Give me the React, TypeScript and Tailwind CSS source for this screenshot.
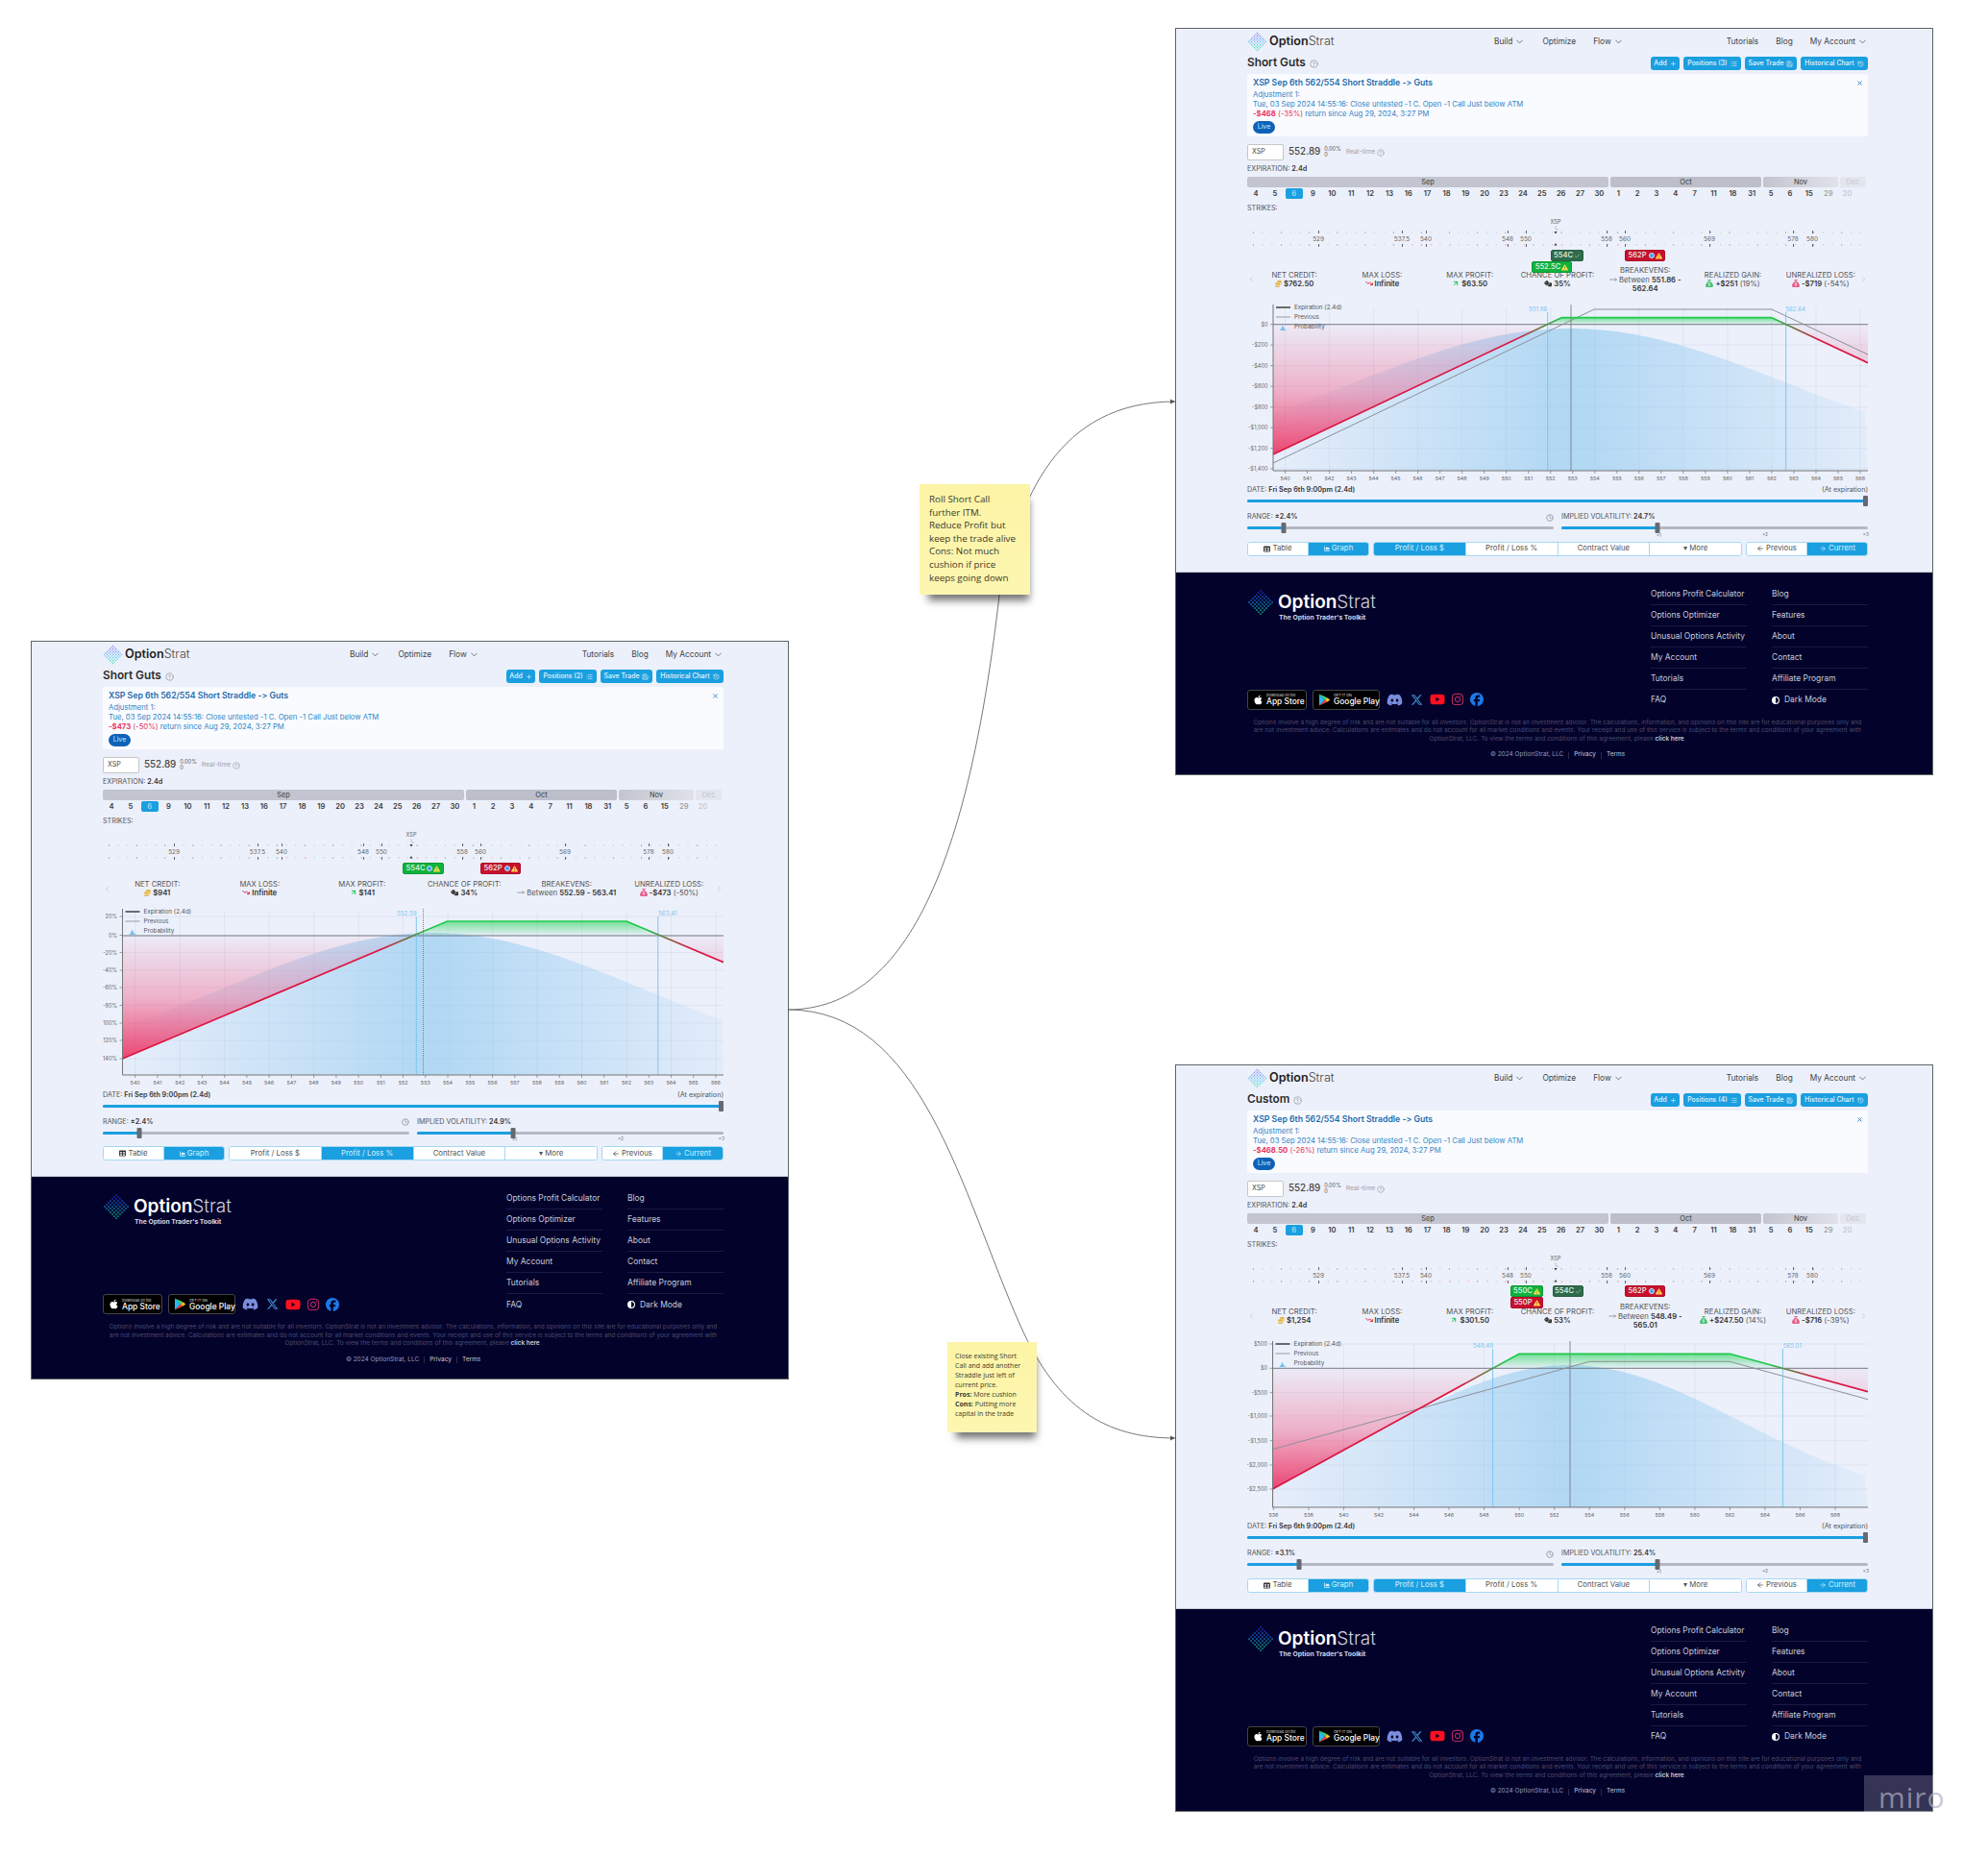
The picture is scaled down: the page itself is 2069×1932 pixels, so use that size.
import React from "react";
import {
  ArrowLeft,
  ArrowRight,
  Check,
  ChevronDown,
  ChevronLeft,
  ChevronRight,
  CircleHelp,
  Clock,
  History,
  List,
  MoveRight,
  Plus,
  Save,
  TrendingDown,
  ArrowUpRight,
  X,
} from "lucide-react";
import {
  FaApple,
  FaChartArea,
  FaCircleHalfStroke,
  FaCoins,
  FaDiscord,
  FaDice,
  FaFacebook,
  FaInstagram,
  FaSackDollar,
  FaTable,
  FaTriangleExclamation,
  FaXTwitter,
  FaYoutube,
} from "react-icons/fa6";

type Pt = [number, number];

interface PillSpec {
  label: string;
  x: number;
  y: number;
  w: number;
  tone: "green" | "dark" | "red";
  info?: boolean;
  check?: boolean;
}

interface StatSpec {
  label: string;
  value: React.ReactNode;
  icon: React.ReactNode;
}

interface ChartSpec {
  id: string;
  plotLeft: number;
  zero: number;
  xStart: number;
  xStep: number;
  xPx: number;
  xTicks: number[];
  xGrid: number[];
  yLabels: [string, number][];
  left: Pt;
  a: Pt;
  b: Pt;
  right: Pt;
  prev?: Pt[];
  be: [string, number][];
  price: number;
  dotted?: boolean;
  mu: number;
  sigma: number;
}

interface FrameSpec {
  left: number;
  top: number;
  title: string;
  positions: number;
  ret: string;
  retPct: string;
  pills: PillSpec[];
  stats: StatSpec[];
  chart: ChartSpec;
  range: string;
  rangePct: number;
  iv: string;
  percentActive?: boolean;
}

const BLUE = "bg-[#1a9fe0]";

const sepDates = [4, 5, 6, 9, 10, 11, 12, 13, 16, 17, 18, 19, 20, 23, 24, 25, 26, 27, 30];
const otherDates = [1, 2, 3, 4, 7, 11, 18, 31, 5, 6, 15];

const footerLinks = [
  ["Options Profit Calculator", "Blog"],
  ["Options Optimizer", "Features"],
  ["Unusual Options Activity", "About"],
  ["My Account", "Contact"],
  ["Tutorials", "Affiliate Program"],
];

const range = (from: number, to: number, step = 1) => {
  const out: number[] = [];
  for (let v = from; v <= to; v += step) out.push(v);
  return out;
};

const Diamond = ({ size, dark }: { size: number; dark?: boolean }) => {
  const dots: React.ReactNode[] = [];
  const n = 7;
  const step = size / (2 * n);
  for (let i = 0; i < n; i++) {
    for (let j = 0; j < n; j++) {
      const t = (i + j) / (2 * n - 2);
      const light = t < 0.5 ? (t < 0.25 ? "#8f7cf0" : "#6f9cf2") : t < 0.75 ? "#5fc6ea" : "#45dcc0";
      const deep = t < 0.5 ? (t < 0.25 ? "#2b35d8" : "#2166e0") : t < 0.75 ? "#1d9ad0" : "#1fc4a4";
      dots.push(
        <circle
          key={`${i}-${j}`}
          cx={size / 2 + (i - j) * step}
          cy={step + (i + j) * step}
          r={step * 0.42}
          fill={dark ? deep : light}
        />
      );
    }
  }
  return (
    <svg width={size} height={size} className="shrink-0">
      {dots}
    </svg>
  );
};

const Nav = () => (
  <div className="flex h-[26px] items-center text-[8.3px] text-[#444]">
    <div className="flex w-[257px] shrink-0 items-center gap-[2px]">
      <Diamond size={21} />
      <span className="text-[12.6px] font-semibold text-[#222]">
        Option<span className="font-light text-[#444]">Strat</span>
      </span>
    </div>
    <div className="flex items-center gap-[18px]">
      <span className="flex items-center gap-[2px]">
        Build <ChevronDown className="h-[11px] w-[11px]" strokeWidth={1.5} />
      </span>
      <span>Optimize</span>
      <span className="flex items-center gap-[2px]">
        Flow <ChevronDown className="h-[11px] w-[11px]" strokeWidth={1.5} />
      </span>
    </div>
    <div className="ml-auto flex items-center gap-[18px]">
      <span>Tutorials</span>
      <span>Blog</span>
      <span className="flex items-center gap-[2px]">
        My Account <ChevronDown className="h-[11px] w-[11px]" strokeWidth={1.5} />
      </span>
    </div>
  </div>
);

const TopBtn = ({ w, label, icon }: { w: string; label: string; icon: React.ReactNode }) => (
  <div className={`flex h-[14px] items-center justify-center gap-[3px] rounded-[3px] text-[6.9px] font-medium text-[#e4f4fd] ${BLUE} ${w}`}>
    {label} {icon}
  </div>
);

const TitleRow = ({ title, positions }: { title: string; positions: number }) => (
  <div className="flex h-[20px] items-center">
    <span className="text-[11.8px] font-semibold text-[#2c2c2c]">{title}</span>
    <CircleHelp className="ml-[4px] h-[9px] w-[9px] text-[#999]" />
    <div className="ml-auto flex items-center gap-[4px]">
      <TopBtn w="w-[30px]" label="Add" icon={<Plus className="h-[7px] w-[7px]" />} />
      <TopBtn w="w-[60px]" label={`Positions (${positions})`} icon={<List className="h-[7px] w-[7px]" />} />
      <TopBtn w="w-[54px]" label="Save Trade" icon={<Save className="h-[7px] w-[7px]" />} />
      <TopBtn w="w-[70px]" label="Historical Chart" icon={<History className="h-[7px] w-[7px]" />} />
    </div>
  </div>
);

const TradeCard = ({ ret, retPct }: { ret: string; retPct: string }) => (
  <div className="relative mt-[1px] h-[65px] rounded-[2px] bg-[#f9fbff] pl-[6px] pt-[4px] text-[7.7px] leading-[10.2px] text-[#3585c4]">
    <div className="mb-[2px] h-[11px] text-[8.7px] font-semibold leading-[11px] text-[#1f6aab] [font-feature-settings:'calt'_0]">
      XSP Sep 6th 562/554 Short Straddle -&gt; Guts
    </div>
    <div>Adjustment 1:</div>
    <div>Tue, 03 Sep 2024 14:55:16: Close untested -1 C. Open -1 Call Just below ATM</div>
    <div>
      <span className="font-bold text-[#e8365d]">{ret}</span> <span className="text-[#e8365d]">{retPct}</span> return since Aug 29, 2024, 3:27 PM
    </div>
    <div className="mt-[1px] flex h-[13px] w-[23px] items-center justify-center rounded-full bg-[#0d62b8] text-[7px] text-[#d5e8fa]">
      Live
    </div>
    <X className="absolute right-[5px] top-[6px] h-[7px] w-[7px] text-[#2a77b8]" strokeWidth={3} />
  </div>
);

const QuoteRow = () => (
  <div className="mt-[8px] flex h-[17px] items-center">
    <div className="flex h-[17px] w-[38px] items-center rounded-[2px] border border-[#c6c6c6] bg-white pl-[4px] text-[7px] text-[#444]">
      XSP
    </div>
    <span className="ml-[5px] text-[9.8px] font-medium text-[#444]">552.89</span>
    <div className="ml-[4px] flex flex-col text-[5.6px] leading-[5.6px] text-[#555]">
      <span>0.00%</span>
      <span>0</span>
    </div>
    <span className="ml-[5px] text-[6.8px] text-[#a0a3ab]">Real-time</span>
    <CircleHelp className="ml-[2px] h-[8px] w-[8px] text-[#a0a3ab]" />
  </div>
);

const DateStrip = () => (
  <>
    <div className="mt-[3px] flex h-[12px] items-center text-[7.2px] text-[#555]">
      EXPIRATION:&nbsp;<span className="font-semibold text-[#333]">2.4d</span>
    </div>
    <div className="mt-[2px] flex h-[11px] gap-[2px] text-center text-[7.4px] font-medium leading-[11px] text-[#555]">
      <div className="w-[376px] rounded-[2px] bg-[#c2c5cf]">Sep</div>
      <div className="w-[157px] rounded-[2px] bg-[#bcbfc9]">Oct</div>
      <div className="w-[78px] rounded-[2px] bg-gradient-to-r from-[#c2c5cf] to-[#e0e2ea]">Nov</div>
      <div className="w-[27px] rounded-[2px] bg-[#e4e6ee] text-[#c9cbd4]">Dec</div>
    </div>
    <div className="-ml-[1px] mt-[1px] flex h-[11px] text-[7.6px] font-semibold leading-[11px] text-[#3a3a3a]">
      {sepDates.concat(otherDates).map((d, i) => (
        <div key={i} className="w-[19.87px] text-center">
          {i === 2 ? <div className={`mx-auto w-[18px] rounded-[2px] text-[#9fd8f5] ${BLUE}`}>{d}</div> : d}
        </div>
      ))}
      <div className="w-[19.87px] text-center font-medium text-[#999]">29</div>
      <div className="w-[19.87px] text-center font-medium text-[#c4c6ce]">20</div>
    </div>
  </>
);

const pillTone = {
  green: "bg-[#0fb33d] border-[#0a9a33]",
  dark: "bg-[#2f6b4b] border-[#2a5f43]",
  red: "bg-[#c8102e] border-[#b00d28]",
};

const Pill = ({ p }: { p: PillSpec }) => (
  <div
    className={`absolute z-10 flex h-[12px] items-center justify-center gap-[1px] rounded-[2px] border text-[7.6px] font-medium text-[#e6f5ea] ${pillTone[p.tone]}`}
    style={{ left: p.x, top: p.y, width: p.w }}
  >
    {p.label}
    {p.info && <span className="ml-[1px] h-[6px] w-[6px] rounded-full border border-[#cfe6fa] bg-[#3c9fe8]" />}
    {p.check ? (
      <Check className="h-[7px] w-[7px] text-[#a8e0c0]" />
    ) : (
      <FaTriangleExclamation className="h-[7px] w-[7px] text-[#ffd84a]" />
    )}
  </div>
);

const strikeLabels: [string, number][] = [
  ["529", 74],
  ["537.5", 161],
  ["540", 186],
  ["548", 271],
  ["550", 290],
  ["558", 374],
  ["560", 393],
  ["569", 481],
  ["578", 568],
  ["580", 588],
];

const StrikeArea = ({ pills }: { pills: PillSpec[] }) => {
  const ticks = range(0, 65).map((i) => 6 + i * 9.72);
  return (
    <div className="relative h-[54px]">
      <svg width={646} height={40} className="absolute left-0 top-0">
        {ticks.map((x, i) => {
          const major = i % 3 === 0;
          const topGreen = x > 290 && x < 545 && i % 2 === 0;
          const lowPink = x > 155 && x < 420 && i % 2 === 1;
          return (
            <g key={i}>
              <rect x={x} y={18} width={0.8} height={major ? 2 : 1.4} fill={topGreen ? "#a0e6b4" : major ? "#a4a7b0" : "#bfc1c9"} />
              <rect x={x} y={31} width={lowPink ? 1.6 : 0.8} height={major ? 2 : 1.4} fill={lowPink ? "#f5bccb" : major ? "#a4a7b0" : "#bfc1c9"} />
            </g>
          );
        })}
        {strikeLabels.map(([t, x]) => (
          <g key={t}>
            <text x={x} y={27.5} fontSize={6.4} fill="#666" textAnchor="middle">
              {t}
            </text>
            <rect x={x} y={17} width={0.9} height={3} fill="#555" />
            <rect x={x} y={31} width={0.9} height={3} fill="#555" />
          </g>
        ))}
        <text x={321} y={10} fontSize={5.6} fill="#666" textAnchor="middle">
          XSP
        </text>
        <path d="M321 12v4h3" fill="none" stroke="#999" strokeWidth={0.5} />
        <path d="M319.5 18h3l-1.5 2.4zM319.5 32.5h3l-1.5-2.4z" fill="#333" />
      </svg>
      {pills.map((p) => (
        <Pill key={p.label} p={p} />
      ))}
    </div>
  );
};

const Stats = ({ stats }: { stats: StatSpec[] }) => (
  <div className="relative flex min-h-[20px] items-center px-[3.5px] text-center text-[7.7px] leading-[9.5px] text-[#555]">
    <ChevronLeft className="absolute left-[0px] top-1/2 h-[9px] w-[9px] -translate-y-1/2 text-[#c0c2ca]" />
    {stats.map((s) => (
      <div key={s.label} className="min-w-0 flex-1">
        <div className="whitespace-nowrap">{s.label}:</div>
        <div>
          <span className="mr-[2px] inline-block align-[-1px]">{s.icon}</span>
          {s.value}
        </div>
      </div>
    ))}
    <ChevronRight className="absolute right-[0px] top-1/2 h-[9px] w-[9px] -translate-y-1/2 text-[#c0c2ca]" />
  </div>
);

const PlChart = ({ c }: { c: ChartSpec }) => {
  const bottom = 174;
  const W = 646;
  const xOf = (v: number) => c.xStart + (v - c.xStep) * c.xPx;
  const be1 = c.be[0][1];
  const be2 = c.be[1][1];
  let prob = `M${c.plotLeft} ${bottom}`;
  for (let x = c.plotLeft; x <= W; x += 4) {
    const y = bottom - 148 * Math.exp(-((x - c.mu) ** 2) / (2 * c.sigma ** 2));
    prob += `L${x} ${y.toFixed(1)}`;
  }
  prob += `L${W} ${bottom}Z`;
  const line = [c.left, c.a, c.b, c.right].map((p) => p.join(" ")).join("L");
  return (
    <svg width={W} height={188} className="block">
      <defs>
        <linearGradient id={`${c.id}-prob`} gradientUnits="userSpaceOnUse" x1={c.plotLeft} x2={W} y1={0} y2={0}>
          <stop offset="0" stopColor="#8cc8ef" stopOpacity={0.06} />
          <stop offset={(c.mu - c.plotLeft) / (W - c.plotLeft)} stopColor="#8cc8ef" stopOpacity={0.62} />
          <stop offset="1" stopColor="#8cc8ef" stopOpacity={0.1} />
        </linearGradient>
        <linearGradient id={`${c.id}-loss`} gradientUnits="userSpaceOnUse" x1={0} x2={0} y1={c.zero} y2={c.left[1]}>
          <stop offset="0" stopColor="#f03a6c" stopOpacity={0.03} />
          <stop offset="0.5" stopColor="#f03a6c" stopOpacity={0.34} />
          <stop offset="1" stopColor="#ee2f60" stopOpacity={0.88} />
        </linearGradient>
        <linearGradient id={`${c.id}-gain`} gradientUnits="userSpaceOnUse" x1={0} x2={0} y1={c.a[1]} y2={c.zero}>
          <stop offset="0" stopColor="#22d455" stopOpacity={0.6} />
          <stop offset="1" stopColor="#22d455" stopOpacity={0.02} />
        </linearGradient>
        <linearGradient id={`${c.id}-line`} gradientUnits="userSpaceOnUse" x1={c.plotLeft} x2={W} y1={0} y2={0}>
          <stop offset={(be1 - 35 - c.plotLeft) / (W - c.plotLeft)} stopColor="#dc1440" />
          <stop offset={(be1 + 14 - c.plotLeft) / (W - c.plotLeft)} stopColor="#1ec94a" />
          <stop offset={(be2 - 14 - c.plotLeft) / (W - c.plotLeft)} stopColor="#1ec94a" />
          <stop offset={(be2 + 35 - c.plotLeft) / (W - c.plotLeft)} stopColor="#dc1440" />
        </linearGradient>
      </defs>
      {c.yLabels.map(([t, y]) => (
        <g key={t}>
          <line x1={c.plotLeft} x2={W} y1={y} y2={y} stroke="#9aa3b8" strokeOpacity={0.22} strokeWidth={0.7} />
          <line x1={c.plotLeft - 3} x2={c.plotLeft} y1={y} y2={y} stroke="#666" strokeWidth={0.6} />
          <text x={c.plotLeft - 5.5} y={y + 2} fontSize={5.6} fill="#666" textAnchor="end">
            {t}
          </text>
        </g>
      ))}
      {c.xGrid.map((v) => (
        <line key={v} x1={xOf(v)} x2={xOf(v)} y1={4} y2={bottom} stroke="#9aa3b8" strokeOpacity={0.22} strokeWidth={0.7} />
      ))}
      <path d={prob} fill={`url(#${c.id}-prob)`} />
      <path d={`M${c.plotLeft} ${c.zero}L${c.left.join(" ")}L${be1} ${c.zero}Z`} fill={`url(#${c.id}-loss)`} />
      <path d={`M${be2} ${c.zero}L${c.right.join(" ")}L${W} ${c.zero}Z`} fill={`url(#${c.id}-loss)`} />
      <path d={`M${be1} ${c.zero}L${c.a.join(" ")}L${c.b.join(" ")}L${be2} ${c.zero}Z`} fill={`url(#${c.id}-gain)`} />
      <line x1={c.plotLeft} x2={W} y1={c.zero} y2={c.zero} stroke="#6b6f78" strokeWidth={0.9} />
      {c.prev && (
        <path d={`M${c.prev.map((p) => p.join(" ")).join("L")}`} fill="none" stroke="#8d8f98" strokeWidth={1} />
      )}
      {c.be.map(([t, x]) => (
        <g key={t}>
          <line x1={x} x2={x} y1={9} y2={bottom} stroke="#7cc6ef" strokeWidth={1} />
          <text x={x - 2 + (x === be2 ? 12 : -8)} y={7.5} fontSize={6.2} fill="#7cc6ef" textAnchor="middle">
            {t}
          </text>
        </g>
      ))}
      <line
        x1={c.price}
        x2={c.price}
        y1={1}
        y2={bottom}
        stroke="#7b7f88"
        strokeWidth={c.dotted ? 1 : 0.9}
        strokeDasharray={c.dotted ? "1 1" : undefined}
      />
      <path d={`M${line}`} fill="none" stroke={`url(#${c.id}-line)`} strokeWidth={1.7} strokeLinejoin="round" />
      <line x1={c.plotLeft} x2={c.plotLeft} y1={1} y2={bottom} stroke="#777" strokeWidth={1} />
      <line x1={c.plotLeft} x2={W} y1={bottom} y2={bottom} stroke="#777" strokeWidth={1} />
      {c.xTicks.map((v) => (
        <g key={v}>
          <line x1={xOf(v)} x2={xOf(v)} y1={bottom} y2={bottom + 3} stroke="#666" strokeWidth={0.6} />
          <text x={xOf(v)} y={184} fontSize={5.4} fill="#666" textAnchor="middle">
            {v}
          </text>
        </g>
      ))}
      <g fontSize={6.3} fill="#555">
        <line x1={c.plotLeft + 3} x2={c.plotLeft + 18} y1={4} y2={4} stroke="#222" strokeWidth={1.3} />
        <text x={c.plotLeft + 22} y={6.2}>
          Expiration (2.4d)
        </text>
        <line x1={c.plotLeft + 3} x2={c.plotLeft + 18} y1={14} y2={14} stroke="#999" strokeWidth={1} />
        <text x={c.plotLeft + 22} y={16}>
          Previous
        </text>
        <path d={`M${c.plotLeft + 6} 28q2 0 4-5.5q2 5.5 5 5.5z`} fill="#73c1ee" />
        <text x={c.plotLeft + 22} y={26}>
          Probability
        </text>
      </g>
    </svg>
  );
};

const Slider = ({ pct, end }: { pct: number; end?: boolean }) => (
  <div className="relative h-[3px] w-full rounded-full bg-[#b5b8c4]">
    <div className={`h-[3px] rounded-full ${BLUE}`} style={{ width: `${pct}%` }} />
    <div
      className={`absolute -top-[4px] h-[11px] w-[5px] rounded-[1px] bg-[#666a70] ${end ? "" : "-translate-x-1/2"}`}
      style={{ left: end ? undefined : `${pct}%`, right: end ? 0 : undefined }}
    />
  </div>
);

const Seg = ({ label, icon, on }: { label: string; icon?: React.ReactNode; on?: boolean }) => (
  <div
    className={`flex flex-1 items-center justify-center gap-[2px] border-l border-[#a5d8f3] first:border-l-0 ${
      on ? `${BLUE} text-[#d9f0fc]` : "bg-white text-[#555]"
    }`}
  >
    {icon}
    {label}
  </div>
);

const Controls = ({ f }: { f: FrameSpec }) => (
  <div className="mt-[1px]">
    <div className="flex h-[12px] items-center justify-between text-[7.2px] text-[#555]">
      <span>
        DATE: <span className="font-semibold text-[#333]">Fri Sep 6th 9:00pm (2.4d)</span>
      </span>
      <span>(At expiration)</span>
    </div>
    <div className="flex h-[10px] items-center">
      <Slider pct={100} end />
    </div>
    <div className="mt-[6px] grid grid-cols-2 gap-x-[8px] text-[7.2px] text-[#555]">
      <div>
        <div className="flex h-[12px] items-center justify-between">
          <span>
            RANGE: <span className="font-semibold text-[#333]">±{f.range}</span>
          </span>
          <Clock className="h-[8px] w-[8px] text-[#a0a3ab]" strokeWidth={3} />
        </div>
        <div className="flex h-[10px] items-center">
          <Slider pct={f.rangePct} />
        </div>
      </div>
      <div>
        <div className="flex h-[12px] items-center">
          IMPLIED VOLATILITY:&nbsp;<span className="font-semibold text-[#333]">{f.iv}</span>
        </div>
        <div className="relative flex h-[10px] items-center">
          <Slider pct={31.5} />
          <span className="absolute left-[31%] top-[10px] text-[4.6px] leading-[5px] text-[#777]">×1</span>
          <span className="absolute left-[65.5%] top-[9px] text-[4.8px] leading-[5px] text-[#777]">×2</span>
          <span className="absolute -right-[1px] top-[9px] text-[4.8px] leading-[5px] text-[#777]">×3</span>
        </div>
      </div>
    </div>
    <div className="mt-[9px] flex h-[15px] gap-[4px] text-[7.8px]">
      <div className="flex w-[127px] overflow-hidden rounded-[3px] border border-[#a5d8f3]">
        <Seg label="Table" icon={<FaTable className="h-[7px] w-[7px] text-[#333]" />} />
        <Seg label="Graph" on icon={<FaChartArea className="h-[6px] w-[6px]" />} />
      </div>
      <div className="flex w-[384px] overflow-hidden rounded-[3px] border border-[#a5d8f3]">
        <Seg label="Profit / Loss $" on={!f.percentActive} />
        <Seg label="Profit / Loss %" on={f.percentActive} />
        <Seg label="Contract Value" />
        <Seg label="▾ More" />
      </div>
      <div className="flex w-[127px] overflow-hidden rounded-[3px] border border-[#a5d8f3]">
        <Seg label="Previous" icon={<ArrowLeft className="h-[8px] w-[8px] text-[#333]" />} />
        <Seg label="Current" on icon={<ArrowRight className="h-[8px] w-[8px]" />} />
      </div>
    </div>
  </div>
);

const GooglePlayIcon = () => (
  <svg width={13} height={15} viewBox="0 0 14 15" className="shrink-0">
    <path d="M1 1v13l6.5-6.5z" fill="#29b6f6" />
    <path d="M1 1l6.5 6.5 2.4-2.4z" fill="#3ddc84" />
    <path d="M1 14l6.5-6.5 2.4 2.4z" fill="#ef4444" />
    <path d="M9.9 5.1l3.4 2.4-3.4 2.4-2.4-2.4z" fill="#fbbf24" />
  </svg>
);

const Footer = () => (
  <div className="h-[211px] border-t border-[#c9ccd6] bg-[#03022b]">
    <div className="ml-[74px] w-[646px]">
      <div className="flex h-[143px] pt-[11px]">
        <div className="flex w-[420px] flex-col justify-between">
          <div className="mt-[6px]">
            <div className="flex items-center gap-[4px]">
              <Diamond size={28} dark />
              <span className="text-[19px] font-semibold leading-[24px] text-white">
                Option<span className="font-light text-[#cfd0da]">Strat</span>
              </span>
            </div>
            <div className="ml-[33px] -mt-[3px] text-[6.8px] font-bold text-[#d7d8e2]">The Option Trader&apos;s Toolkit</div>
          </div>
          <div className="flex items-center">
            <div className="flex h-[21px] w-[62px] items-center gap-[3px] whitespace-nowrap rounded-[3px] border border-[#444] bg-black pl-[5px] text-white">
              <FaApple className="h-[11px] w-[11px]" />
              <div className="text-[8.4px] font-medium leading-[8.4px]">
                <div className="text-[3.8px] leading-[5px] text-[#bbb]">Download on the</div>
                App Store
              </div>
            </div>
            <div className="ml-[6px] flex h-[21px] w-[70px] items-center gap-[3px] whitespace-nowrap rounded-[3px] border border-[#444] bg-black pl-[5px] text-white">
              <GooglePlayIcon />
              <div className="text-[8.4px] font-medium leading-[8.4px]">
                <div className="text-[3.8px] leading-[5px] text-[#bbb]">GET IT ON</div>
                Google Play
              </div>
            </div>
            <FaDiscord className="ml-[7px] h-[17px] w-[17px] text-[#7a8edc]" />
            <FaXTwitter className="ml-[8px] h-[13px] w-[13px] text-[#3e86c6]" />
            <FaYoutube className="ml-[7px] h-[16px] w-[16px] text-[#ff0f1f]" />
            <FaInstagram className="ml-[6px] h-[14px] w-[14px] text-[#b8285f]" />
            <FaFacebook className="ml-[6px] h-[14px] w-[14px] text-[#1d78e8]" />
          </div>
        </div>
        <div className="mt-[1px] grid w-[226px] grid-cols-2 gap-x-[26px] text-[8.45px] text-[#c9cad6]">
          {footerLinks.flat().map((t) => (
            <div key={t} className="flex h-[22px] items-center whitespace-nowrap border-b border-[#1a1a45]">
              {t}
            </div>
          ))}
          <div className="flex h-[22px] items-center">FAQ</div>
          <div className="flex h-[22px] items-center gap-[5px]">
            <FaCircleHalfStroke className="h-[8px] w-[8px] text-white" /> Dark Mode
          </div>
        </div>
      </div>
      <div className="mt-[9px] whitespace-nowrap text-center text-[6.45px] leading-[8.5px] text-[#4c4c6c]">
        Options involve a high degree of risk and are not suitable for all investors. OptionStrat is not an investment advisor. The calculations, information, and opinions on this site are for educational purposes only and
        <br />
        are not investment advice. Calculations are estimates and do not account for all market conditions and events. Your receipt and use of this service is subject to the terms and conditions of your agreement with
        <br />
        OptionStrat, LLC. To view the terms and conditions of this agreement, please <span className="font-semibold text-[#c9cad6]">click here</span>.
      </div>
      <div className="mt-[7px] flex h-[12px] items-center justify-center text-[6.5px] text-[#9a9bb0]">
        © 2024 OptionStrat, LLC
        <span className="mx-[5px] h-[7px] w-px bg-[#2a2a50]" />
        <span className="text-[#c9cad6]">Privacy</span>
        <span className="mx-[5px] h-[7px] w-px bg-[#2a2a50]" />
        <span className="text-[#c9cad6]">Terms</span>
      </div>
    </div>
  </div>
);

const Frame = ({ f }: { f: FrameSpec }) => (
  <div
    className="absolute w-[789px] overflow-hidden border border-[#5f6368] [font-family:Inter,sans-serif]"
    style={{ left: f.left, top: f.top }}
  >
    <div className="bg-[#ecf0fb]">
      <div className="ml-[74px] w-[646px] pb-[16px]">
        <Nav />
        <TitleRow title={f.title} positions={f.positions} />
        <TradeCard ret={f.ret} retPct={f.retPct} />
        <QuoteRow />
        <DateStrip />
        <div className="mt-[4px] flex h-[12px] items-center text-[7.2px] text-[#555]">STRIKES:</div>
        <StrikeArea pills={f.pills} />
        <Stats stats={f.stats} />
        <div className="mt-[10px]">
          <PlChart c={f.chart} />
        </div>
        <Controls f={f} />
      </div>
    </div>
    <Footer />
  </div>
);

const bold = (t: string) => <span className="font-semibold text-[#333]">{t}</span>;

const mkStats = (
  credit: string,
  profit: string,
  chance: string,
  be: string,
  unreal: [string, string],
  realized?: [string, string]
): StatSpec[] => {
  const out: StatSpec[] = [
    { label: "NET CREDIT", value: bold(credit), icon: <FaCoins className="h-[7px] w-[7px] text-[#e3b23c]" /> },
    { label: "MAX LOSS", value: bold("Infinite"), icon: <TrendingDown className="h-[8px] w-[8px] text-[#e0284f]" strokeWidth={3} /> },
    { label: "MAX PROFIT", value: bold(profit), icon: <ArrowUpRight className="h-[8px] w-[8px] text-[#22c55e]" strokeWidth={3} /> },
    { label: "CHANCE OF PROFIT", value: bold(chance), icon: <FaDice className="h-[8px] w-[8px] text-[#333]" /> },
    {
      label: "BREAKEVENS",
      value: (
        <>
          Between {bold(be)}
        </>
      ),
      icon: <MoveRight className="h-[8px] w-[8px] text-[#777]" />,
    },
  ];
  if (realized) {
    out.push({
      label: "REALIZED GAIN",
      value: (
        <>
          {bold(realized[0])} {realized[1]}
        </>
      ),
      icon: <FaSackDollar className="h-[8px] w-[8px] text-[#4cc276]" />,
    });
  }
  out.push({
    label: "UNREALIZED LOSS",
    value: (
      <>
        {bold(unreal[0])} {unreal[1]}
      </>
    ),
    icon: <FaSackDollar className="h-[8px] w-[8px] text-[#e8608a]" />,
  });
  return out;
};

const frames: FrameSpec[] = [
  {
    left: 32,
    top: 667,
    title: "Short Guts",
    positions: 2,
    ret: "-$473",
    retPct: "(-50%)",
    percentActive: true,
    range: "2.4%",
    rangePct: 11.9,
    iv: "24.9%",
    pills: [
      { label: "554C", x: 312, y: 37, w: 43, tone: "green", info: true },
      { label: "562P", x: 393, y: 37, w: 42, tone: "red", info: true },
    ],
    stats: mkStats("$941", "$141", "34%", "552.59 - 563.41", ["-$473", "(-50%)"]),
    chart: {
      id: "a",
      plotLeft: 20.5,
      zero: 29,
      xStart: 33.7,
      xStep: 540,
      xPx: 23.24,
      xTicks: range(540, 566),
      xGrid: range(540, 566, 2),
      yLabels: [
        ["20%", 9],
        ["0%", 28.5],
        ["-20%", 46.5],
        ["-40%", 65],
        ["-60%", 83],
        ["-80%", 101.5],
        ["100%", 120],
        ["120%", 138],
        ["140%", 157],
      ],
      left: [20.5, 157],
      a: [358.6, 14],
      b: [545, 14],
      right: [646, 56.7],
      be: [
        ["552.59", 326.3],
        ["563.41", 577.8],
      ],
      price: 333.5,
      dotted: true,
      mu: 343,
      sigma: 219,
    },
  },
  {
    left: 1223,
    top: 29,
    title: "Short Guts",
    positions: 3,
    ret: "-$468",
    retPct: "(-35%)",
    range: "2.4%",
    rangePct: 11.9,
    iv: "24.7%",
    pills: [
      { label: "554C", x: 316, y: 37, w: 34, tone: "dark", check: true },
      { label: "552.5C", x: 296, y: 49, w: 42, tone: "green" },
      { label: "562P", x: 393, y: 37, w: 42, tone: "red", info: true },
    ],
    stats: mkStats("$762.50", "$63.50", "35%", "551.86 - 562.64", ["-$719", "(-54%)"], ["+$251", "(19%)"]),
    chart: {
      id: "b",
      plotLeft: 27,
      zero: 21.7,
      xStart: 39.5,
      xStep: 540,
      xPx: 23.02,
      xTicks: range(540, 566),
      xGrid: range(540, 566, 2),
      yLabels: [
        ["$0", 21.7],
        ["-$200", 43.2],
        ["-$400", 64.7],
        ["-$600", 86.2],
        ["-$800", 107.7],
        ["-$1,000", 129.2],
        ["-$1,200", 150.7],
        ["-$1,400", 172],
      ],
      left: [27, 157],
      a: [327, 14.7],
      b: [546, 14.7],
      right: [646, 61.7],
      prev: [
        [27, 166],
        [361, 6],
        [546, 6],
        [646, 53],
      ],
      be: [
        ["551.86", 312.7],
        ["562.64", 560.7],
      ],
      price: 337,
      mu: 336,
      sigma: 230,
    },
  },
  {
    left: 1223,
    top: 1108,
    title: "Custom",
    positions: 4,
    ret: "-$468.50",
    retPct: "(-26%)",
    range: "3.1%",
    rangePct: 17,
    iv: "25.4%",
    pills: [
      { label: "550C", x: 274, y: 36, w: 34, tone: "green" },
      { label: "550P", x: 274, y: 48, w: 34, tone: "red" },
      { label: "554C", x: 318, y: 36, w: 32, tone: "dark", check: true },
      { label: "562P", x: 393, y: 36, w: 42, tone: "red", info: true },
    ],
    stats: mkStats("$1,254", "$301.50", "53%", "548.49 - 565.01", ["-$716", "(-39%)"], ["+$247.50", "(14%)"]),
    chart: {
      id: "c",
      plotLeft: 26.5,
      zero: 29.3,
      xStart: 27.4,
      xStep: 536,
      xPx: 18.27,
      xTicks: range(536, 568, 2),
      xGrid: range(536, 568, 4),
      yLabels: [
        ["$500", 4],
        ["$0", 29.3],
        ["-$500", 54.7],
        ["-$1,000", 79],
        ["-$1,500", 104.7],
        ["-$2,000", 130],
        ["-$2,500", 155],
      ],
      left: [26.5, 155],
      a: [283.2, 14.3],
      b: [502.4, 14.3],
      right: [646, 53.7],
      prev: [
        [26.5, 113.7],
        [356.3, 22.3],
        [502.4, 22.3],
        [646, 61.7],
      ],
      be: [
        ["548.49", 255.6],
        ["565.01", 557.4],
      ],
      price: 336,
      mu: 335,
      sigma: 178,
    },
  },
];

const Note = ({ className, children }: { className: string; children: React.ReactNode }) => (
  <div
    className={`absolute bg-gradient-to-b from-[#fdf4a6] to-[#fdf6b0] text-[#3a3a2a] shadow-[4px_11px_8px_-5px_rgba(0,0,0,0.55)] [font-family:'Open_Sans',sans-serif] ${className}`}
  >
    {children}
  </div>
);

export default function App() {
  return (
    <div className="relative h-[1932px] w-[2069px] overflow-hidden bg-white">
      <svg width={2069} height={1932} className="absolute left-0 top-0">
        <g fill="none" stroke="#777" strokeWidth={1}>
          <path d="M820 1051C950 1051 1010 880 1040 620C1060 520 1100 418 1223 418" />
          <path d="M820 1051C960 1051 1000 1240 1062 1380C1100 1465 1150 1497 1223 1497" />
        </g>
        <path d="M1218 415.5l5 2.5-5 2.5zM1218 1494.5l5 2.5-5 2.5z" fill="#555" />
      </svg>
      {frames.map((f) => (
        <Frame key={f.chart.id} f={f} />
      ))}
      <Note className="left-[957px] top-[504px] h-[115px] w-[115px] pl-[10px] pt-[9px] text-[9.8px] leading-[13.6px]">
        Roll Short Call
        <br />
        further ITM.
        <br />
        Reduce Profit but
        <br />
        keep the trade alive
        <br />
        Cons: Not much
        <br />
        cushion if price
        <br />
        keeps going down
      </Note>
      <Note className="left-[986px] top-[1397px] h-[94px] w-[93px] pl-[8px] pt-[10px] text-[7px] leading-[10px]">
        Close existing Short
        <br />
        Call and add another
        <br />
        Straddle just left of
        <br />
        current price.
        <br />
        <b>Pros:</b> More cushion
        <br />
        <b>Cons:</b> Putting more
        <br />
        capital in the trade
      </Note>
      <div className="absolute left-[1940px] top-[1848px] h-[38px] w-[72px] bg-white/20" />
      <div className="absolute left-[1955px] top-[1850px] text-[30px] leading-[42px] tracking-[1px] text-[#b0b0c3]/70 [font-family:'Open_Sans',sans-serif]">
        miro
      </div>
    </div>
  );
}
